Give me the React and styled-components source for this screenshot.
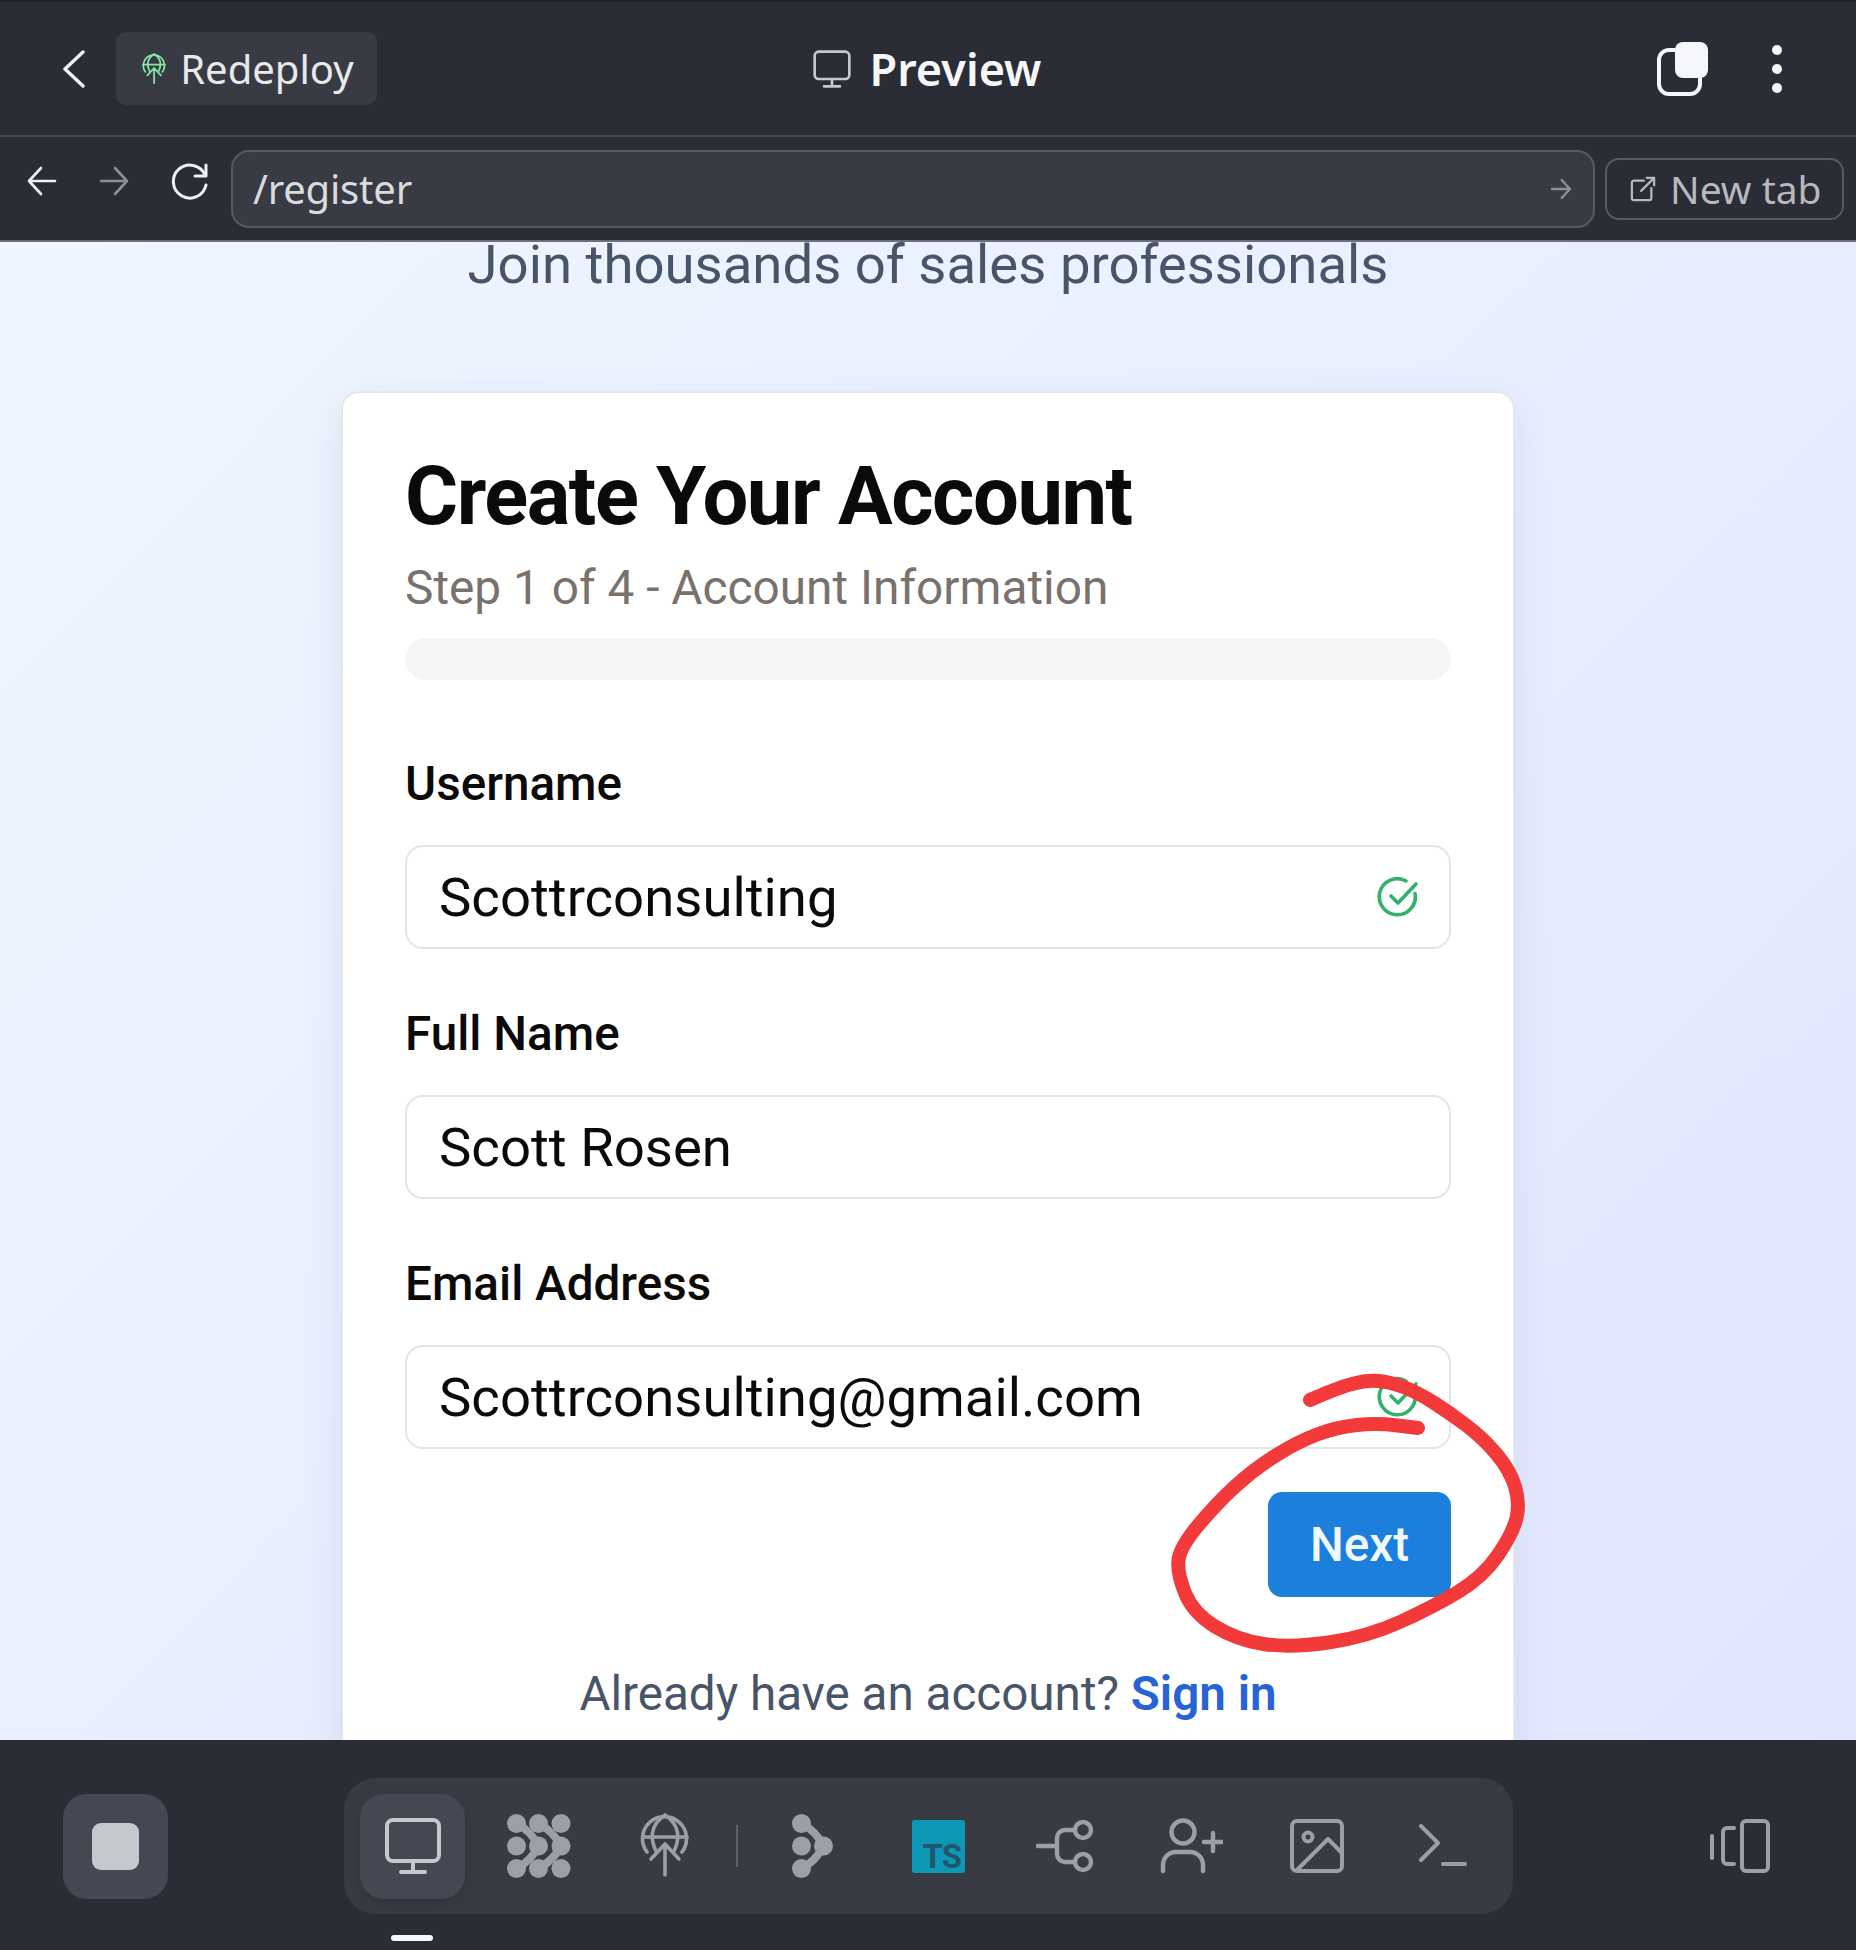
import React from "react";
import styled, { createGlobalStyle } from "styled-components";

const GlobalStyle = createGlobalStyle`
  html, body {
    margin: 0;
    padding: 0;
    background: #2a2d35;
  }
  * {
    box-sizing: border-box;
  }
`;

const Page = styled.div`
  position: relative;
  display: flex;
  flex-direction: column;
  width: 1856px;
  height: 1950px;
  overflow: hidden;
  font-family: Roboto, "Liberation Sans", sans-serif;
`;

const TopBar = styled.header`
  display: grid;
  grid-template-columns: 1fr auto 1fr;
  align-items: center;
  height: 137px;
  padding: 0 60px;
  background: #2a2d35;
  border-top: 2px solid #23252b;
  border-bottom: 2px solid #3f434c;
`;

const TopLeft = styled.div`
  display: flex;
  align-items: center;
  gap: 30px;
  padding-left: 2px;
`;

const Chip = styled.div`
  display: flex;
  align-items: center;
  gap: 14px;
  height: 73px;
  padding: 0 23px 0 26px;
  border-radius: 10px;
  background: #383b43;
  color: #e8e9eb;
  font-family: "Noto Sans", Roboto, sans-serif;
  font-size: 40px;
`;

const Title = styled.div`
  display: flex;
  align-items: center;
  gap: 16px;
  padding-right: 5px;
  color: #f5f7fa;
  font-family: "Noto Sans", Roboto, sans-serif;
  font-size: 45px;
  font-weight: 600;
`;

const TopRight = styled.div`
  display: flex;
  justify-content: flex-end;
  align-items: center;
  gap: 63px;
  margin-right: 16px;
`;

const Dots = styled.div`
  display: flex;
  flex-direction: column;
  gap: 9px;
  margin-right: -2px;

  i {
    width: 10px;
    height: 10px;
    border-radius: 50%;
    background: #f5f7fa;
  }
`;

const BrowserBar = styled.div`
  display: flex;
  align-items: center;
  height: 105px;
  padding: 0 12px 0 26px;
  background: #2a2d35;
  border-bottom: 2px solid #6b6f78;
`;

const NavButtons = styled.div`
  display: flex;
  align-items: center;
  gap: 40px;
  margin-right: 21px;
  margin-top: -15px;
`;

const UrlBox = styled.div`
  display: flex;
  justify-content: space-between;
  align-items: center;
  flex: 1;
  height: 78px;
  padding: 0 21px 0 20px;
  border: 2px solid #565a64;
  border-radius: 18px;
  background: #383b43;
  color: #d9dbde;
  font-family: "Noto Sans", Roboto, sans-serif;
  font-size: 40px;
  letter-spacing: -0.2px;
`;

const NewTab = styled.div`
  display: flex;
  align-items: center;
  gap: 14px;
  width: 239px;
  height: 62px;
  margin-left: 10px;
  padding-left: 23px;
  border: 2px solid #565a64;
  border-radius: 14px;
  color: #b7b9bd;
  font-family: "Noto Sans", Roboto, sans-serif;
  font-size: 39px;
  white-space: nowrap;
`;

const Content = styled.main`
  flex: 1;
  min-height: 0;
  overflow: hidden;
  background: linear-gradient(135deg, #eff6ff, #e0e7ff);
`;

const Lead = styled.p`
  margin: -9px 0 0;
  color: #475569;
  font-size: 54.5px;
  line-height: 62px;
  text-align: center;
`;

const Card = styled.section`
  width: 1174px;
  margin: 96px auto 0;
  padding: 58px 62px 160px;
  border: 2px solid #e5e7eb;
  border-radius: 18px;
  background: #fff;
  box-shadow: 0 12px 40px rgba(90, 100, 140, 0.12);
`;

const Heading = styled.h1`
  margin: 0;
  color: #0c0a09;
  font-size: 81.3px;
  font-weight: 700;
  line-height: 92px;
  letter-spacing: -1.45px;
`;

const Step = styled.p`
  margin: 17px 0 0;
  color: #78716c;
  font-size: 47.8px;
  line-height: 56px;
`;

const Progress = styled.div`
  height: 42px;
  margin-top: 22px;
  margin-bottom: 77px;
  border-radius: 21px;
  background: #f5f5f4;
`;

const Label = styled.div`
  color: #0c0a09;
  font-size: 47.6px;
  font-weight: 500;
  line-height: 54px;
`;

const Field = styled.div`
  display: flex;
  justify-content: space-between;
  align-items: center;
  height: 104px;
  margin: 34px 0 58px;
  padding: 0 30px 0 32px;
  border: 2px solid #e7e5e4;
  border-radius: 18px;
  color: #0c0a09;
  font-size: 54.5px;
`;

const Actions = styled.div`
  display: flex;
  justify-content: flex-end;
  margin-top: -15px;
`;

const NextButton = styled.button`
  width: 183px;
  height: 105px;
  border: 0;
  border-radius: 14px;
  background: #1c7fdc;
  color: #f0f9ff;
  font-family: inherit;
  font-size: 47.6px;
  font-weight: 500;
`;

const SignIn = styled.p`
  margin: 69px 0 0;
  color: #475569;
  font-size: 47.6px;
  line-height: 56px;
  text-align: center;

  a {
    color: #2563d6;
    font-weight: 600;
  }
`;

const BottomBar = styled.footer`
  position: relative;
  display: flex;
  align-items: center;
  height: 210px;
  padding: 2px 0 0 63px;
  background: #2a2d35;
`;

const StopButton = styled.div`
  display: flex;
  justify-content: center;
  align-items: center;
  width: 105px;
  height: 105px;
  border-radius: 24px;
  background: #454852;

  i {
    width: 47px;
    height: 47px;
    border-radius: 9px;
    background: #c5c9cd;
  }
`;

const Dock = styled.nav`
  display: flex;
  align-items: center;
  width: 1169px;
  height: 136px;
  margin-left: 176px;
  padding: 0 16px;
  border-radius: 32px;
  background: #383b43;
`;

const DockItem = styled.div`
  position: relative;
  display: flex;
  justify-content: center;
  align-items: center;
  flex: none;
  width: 105px;
  height: 105px;
  margin-right: ${(p) => p.$gap ?? 21}px;
  border-radius: 24px;
  background: ${(p) => (p.$active ? "#454852" : "transparent")};
  box-shadow: ${(p) => (p.$active ? "0 6px 14px rgba(0, 0, 0, 0.12)" : "none")};
  color: ${(p) => (p.$active ? "#c5c9cd" : "#9ca0a6")};
`;

const Indicator = styled.span`
  position: absolute;
  left: 31px;
  bottom: -42px;
  width: 42px;
  height: 6px;
  border-radius: 3px;
  background: #f5f7fa;
`;

const Divider = styled.span`
  flex: none;
  width: 2px;
  height: 42px;
  margin: 0 22px 0 19px;
  background: #5e626c;
`;

const TsBadge = styled.div`
  display: flex;
  justify-content: flex-end;
  align-items: flex-end;
  width: 53px;
  height: 53px;
  padding: 0 4px 1px 0;
  border-radius: 3px;
  background: #0e98b8;
  color: #21566b;
  font-size: 33px;
  font-weight: 700;
  line-height: 30px;
  letter-spacing: -1px;
`;

const SideIcon = styled.div`
  display: flex;
  margin-left: 197px;
  color: #9ca0a6;
`;

const Scribble = styled.svg`
  position: absolute;
  top: 0;
  left: 0;
  pointer-events: none;
`;

const IconTint = styled.span`
  display: flex;
  color: ${(p) => p.$color};
`;

const line = {
  fill: "none",
  stroke: "currentColor",
  strokeLinecap: "round",
  strokeLinejoin: "round",
};

const MonitorIcon = ({ size = 66 }) => (
  <svg width={size} height={size} viewBox="0 0 66 66" {...line} strokeWidth="4">
    <rect x="7" y="7" width="52" height="41" rx="6" />
    <path d="M33 48v10M21 59h24" />
  </svg>
);

const GlobeUpIcon = ({ height = 66 }) => (
  <svg width={(height * 50) / 66} height={height} viewBox="-2 -2 50 66" {...line} strokeWidth="3.6">
    <path d="M5 37a22 22 0 1 1 35 0" />
    <path d="M1 22h44M23 0c-15 10-15 24-9 36M23 0c15 10 15 24 9 36" />
    <path d="M23 60V29M9 44l14-15 14 15" />
  </svg>
);

const MeshIcon = () => (
  <svg width="64" height="64" viewBox="0 0 64 64" fill="currentColor">
    {[9.5, 31.5, 54].map((x) =>
      [9.5, 32, 54.5].map((y) => <circle key={`${x}-${y}`} cx={x} cy={y} r="9.5" />)
    )}
    <g fill="none" stroke="currentColor" strokeWidth="8" strokeLinecap="round">
      <path d="M9.500 9.500Q24 17 31.500 32Q24 47 9.500 54.500" />
      <path d="M31.500 9.500Q46 17 54 32Q46 47 31.500 54.500" />
    </g>
  </svg>
);

const AgentIcon = () => (
  <svg width="42" height="64" viewBox="0 0 42 64" fill="currentColor">
    <circle cx="9.5" cy="9.5" r="9.5" />
    <circle cx="9.5" cy="32" r="9.5" />
    <circle cx="9.5" cy="54.5" r="9.5" />
    <circle cx="31.5" cy="32" r="9.5" />
    <path
      d="M9.500 9.500Q24 17 31.500 32Q24 47 9.500 54.500"
      fill="none"
      stroke="currentColor"
      strokeWidth="8"
      strokeLinecap="round"
    />
  </svg>
);

const BranchIcon = () => (
  <svg width="58" height="56" viewBox="0 0 58 56" {...line} strokeWidth="4.4">
    <path d="M2 28h19M39 12H29a8 8 0 0 0-8 8v16a8 8 0 0 0 8 8h10" />
    <circle cx="47" cy="12" r="8" />
    <circle cx="47" cy="44" r="8" />
  </svg>
);

const UserPlusIcon = () => (
  <svg width="64" height="56" viewBox="0 0 64 56" {...line} strokeWidth="4.4">
    <circle cx="24" cy="14" r="11.5" />
    <path d="M4 53v-6a13 13 0 0 1 13-13h14a13 13 0 0 1 13 13v6" />
    <path d="M54 15v18M45 24h18" />
  </svg>
);

const ImageIcon = () => (
  <svg width="54" height="54" viewBox="0 0 54 54" {...line} strokeWidth="4">
    <rect x="2" y="2" width="50" height="50" rx="5" />
    <circle cx="18" cy="18" r="4.5" />
    <path d="M8 50l30-30 14 14" />
  </svg>
);

const TerminalIcon = () => (
  <svg width="50" height="46" viewBox="0 0 50 46" {...line} strokeWidth="4">
    <path d="M3 3l17 17-17 17M25 41h22" />
  </svg>
);

const SideBySideIcon = () => (
  <svg width="60" height="54" viewBox="0 0 60 54" {...line} strokeWidth="4">
    <rect x="32" y="2" width="26" height="50" rx="4" />
    <path d="M24 9h-7a4 4 0 0 0-4 4v28a4 4 0 0 0 4 4h7M2 17v22" />
  </svg>
);

const CopyIcon = () => (
  <svg width="52" height="54" viewBox="0 0 52 54">
    <rect x="2" y="8" width="41" height="44" rx="10" fill="none" stroke="#f5f7fa" strokeWidth="4" />
    <rect x="18" y="0" width="33" height="36" rx="8" fill="#f5f7fa" />
  </svg>
);

const BackChevron = () => (
  <svg width="24" height="38" viewBox="0 0 24 38" {...line} stroke="#f0f1f3" strokeWidth="3.4">
    <path d="M21 2L3 19l18 17" />
  </svg>
);

const ArrowIcon = ({ flip, color, size = 32, width = 2.6 }) => (
  <svg
    width={size}
    height={size}
    viewBox="0 0 32 32"
    {...line}
    stroke={color}
    strokeWidth={width}
    transform={flip ? "scale(-1 1)" : undefined}
  >
    <path d="M3 16h26M17 3l12 13-12 13" />
  </svg>
);

const ReloadIcon = () => (
  <svg width="40" height="40" viewBox="0 0 40 40" {...line} stroke="#f0f1f3" strokeWidth="3">
    <path d="M35 14A16.500 16.500 0 1 0 36 24" />
    <path d="M36 4v11H25" />
  </svg>
);

const ExternalIcon = () => (
  <svg width="26" height="26" viewBox="0 0 28 28" {...line} stroke="#b7b9bd" strokeWidth="2.4">
    <path d="M15 5H4a2 2 0 0 0-2 2v17a2 2 0 0 0 2 2h17a2 2 0 0 0 2-2V13M12 16L26 2M18 2h8v8" />
  </svg>
);

const CheckIcon = () => (
  <svg width="42" height="42" viewBox="0 0 42 42" {...line} stroke="#31b26a" strokeWidth="3.6">
    <path d="M38 17.500A18 18 0 1 1 29 5" />
    <path d="M14 20l7 7 18-19" />
  </svg>
);

// hand drawn circle round the Next button, points in page pixels
const circlePoints = [
  [1310, 1400], [1337, 1388], [1367, 1380], [1390, 1382], [1417, 1392], [1450, 1413],
  [1483, 1438], [1510, 1470], [1520, 1503], [1513, 1533], [1483, 1577], [1433, 1607],
  [1367, 1637], [1290, 1648], [1237, 1640], [1193, 1613], [1177, 1573], [1180, 1547],
  [1217, 1503], [1253, 1470], [1297, 1442], [1337, 1427], [1377, 1423], [1418, 1428],
];

const smoothPath = (pts) => {
  let d = `M${pts[0][0]} ${pts[0][1]}`;
  for (let i = 1; i < pts.length - 1; i++) {
    const mx = (pts[i][0] + pts[i + 1][0]) / 2;
    const my = (pts[i][1] + pts[i + 1][1]) / 2;
    d += ` Q${pts[i][0]} ${pts[i][1]} ${mx} ${my}`;
  }
  const last = pts[pts.length - 1];
  return `${d} L${last[0]} ${last[1]}`;
};

const FormField = ({ label, value, valid }) => (
  <>
    <Label>{label}</Label>
    <Field>
      <span>{value}</span>
      {valid && <CheckIcon />}
    </Field>
  </>
);

export default function App() {
  return (
    <Page>
      <GlobalStyle />
      <TopBar>
        <TopLeft>
          <BackChevron />
          <Chip>
            <IconTint $color="#86e6a4">
              <GlobeUpIcon height={32} />
            </IconTint>
            Redeploy
          </Chip>
        </TopLeft>
        <Title>
          <IconTint $color="#c5c9cd">
            <MonitorIcon size={44} />
          </IconTint>
          Preview
        </Title>
        <TopRight>
          <CopyIcon />
          <Dots>
            <i />
            <i />
            <i />
          </Dots>
        </TopRight>
      </TopBar>
      <BrowserBar>
        <NavButtons>
          <ArrowIcon flip color="#f0f1f3" />
          <ArrowIcon color="#8c8f95" />
          <ReloadIcon />
        </NavButtons>
        <UrlBox>
          /register
          <ArrowIcon color="#8c8f95" size={22} width={3.4} />
        </UrlBox>
        <NewTab>
          <ExternalIcon />
          New tab
        </NewTab>
      </BrowserBar>
      <Content>
        <Lead>Join thousands of sales professionals</Lead>
        <Card>
          <Heading>Create Your Account</Heading>
          <Step>Step 1 of 4 - Account Information</Step>
          <Progress />
          <FormField label="Username" value="Scottrconsulting" valid />
          <FormField label="Full Name" value="Scott Rosen" />
          <FormField label="Email Address" value="Scottrconsulting@gmail.com" valid />
          <Actions>
            <NextButton>Next</NextButton>
          </Actions>
          <SignIn>
            Already have an account? <a>Sign in</a>
          </SignIn>
        </Card>
      </Content>
      <BottomBar>
        <StopButton>
          <i />
        </StopButton>
        <Dock>
          <DockItem $active>
            <MonitorIcon />
            <Indicator />
          </DockItem>
          <DockItem>
            <MeshIcon />
          </DockItem>
          <DockItem $gap={0}>
            <GlobeUpIcon />
          </DockItem>
          <Divider />
          <DockItem>
            <AgentIcon />
          </DockItem>
          <DockItem>
            <TsBadge>TS</TsBadge>
          </DockItem>
          <DockItem>
            <BranchIcon />
          </DockItem>
          <DockItem>
            <UserPlusIcon />
          </DockItem>
          <DockItem>
            <ImageIcon />
          </DockItem>
          <DockItem $gap={0}>
            <TerminalIcon />
          </DockItem>
        </Dock>
        <SideIcon>
          <SideBySideIcon />
        </SideIcon>
      </BottomBar>
      <Scribble width="1856" height="1950" viewBox="0 0 1856 1950">
        <path d={smoothPath(circlePoints)} fill="none" stroke="#f23a3a" strokeWidth="14" strokeLinecap="round" strokeLinejoin="round" />
      </Scribble>
    </Page>
  );
}
